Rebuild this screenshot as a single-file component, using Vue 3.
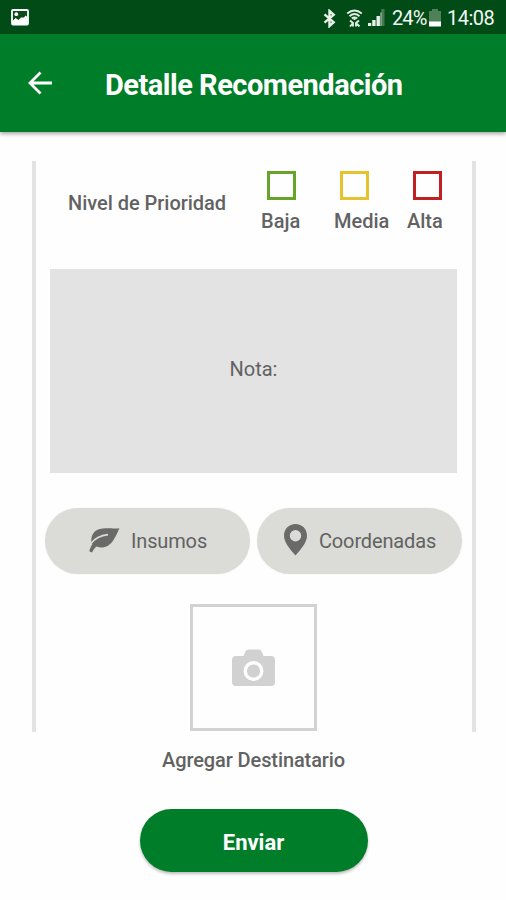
<script setup>
const levels = [
  { name: 'Baja', key: 'low' },
  { name: 'Media', key: 'mid' },
  { name: 'Alta', key: 'high' },
]
</script>

<template>
  <div class="screen">
    <div class="status">
      <svg class="picture" viewBox="0 0 18 17">
        <rect x="1" y="1" width="16" height="14.5" rx="1" fill="#0c4a18" stroke="#fff" stroke-width="1.8" />
        <path d="M1.5 15.500V12L4.500 9 7.500 11 10 8.500 13 8.500 14.500 6.500 16.500 8V15.500z" fill="#fff" />
        <circle cx="5.300" cy="5.200" r="1.900" fill="#fff" />
      </svg>
      <div class="indicators">
        <svg class="bluetooth" viewBox="0 0 13 19">
          <path d="M1.500 5.300 10.700 13.200 6.500 17V2L10.700 5.800 1.500 13.700" fill="none" stroke="#e9f2ea" stroke-width="2.400" />
        </svg>
        <svg class="wifi" viewBox="0 0 17 18" fill="none" stroke="#e0ebe1">
          <path d="M1.200 4.500Q8.500-1.600 15.800 4.500M3.500 7.200Q8.500 3 13.500 7.200M5.800 9.500Q8.500 7.400 11.200 9.500" stroke-width="1.900" />
          <path d="M8.500 9v2" stroke-width="2" />
          <path d="M4 11.500 7 14V17.500M4 17.500 7 14M13 11.500 10 14V17.500M13.500 17.500 10 14" stroke-width="1.900" />
        </svg>
        <svg class="signal" viewBox="0 0 18 17">
          <path d="M0 17v-3h3.300v3zM4.200 17v-6h3.400v6zM8.500 17V7h3.400v10z" fill="#e9f2ea" />
          <path d="M13.200 17V0h3.300v17z" fill="#46774f" />
          <path d="M13 17V3.500" stroke="#c8d8ca" />
        </svg>
        <span class="percent">24%</span>
        <svg class="battery" viewBox="0 0 12 18">
          <path d="M0 2h3V0h6v2h3v11H0z" fill="#4f8159" />
          <path d="M0 12.500h12v5H0z" fill="#fff" />
        </svg>
        <span class="clock">14:08</span>
      </div>
    </div>
    <header class="bar">
      <svg class="back" viewBox="0 0 24 24">
        <path d="M12.500 1.500 2 12l10.500 10.500M2 12h22" fill="none" stroke="#fff" stroke-width="2.800" />
      </svg>
      <h1>Detalle Recomendación</h1>
    </header>

    <main>
      <section class="panel">
        <div class="priority">
          <span class="caption">Nivel de Prioridad</span>
          <div class="levels">
            <div v-for="level in levels" :key="level.key" class="level" :class="level.key">
              <span class="box"></span>
              <span class="name">{{ level.name }}</span>
            </div>
          </div>
        </div>
        <div class="note"><span>Nota:</span></div>
        <div class="actions">
          <button class="pill supplies">
            <svg class="leaf" viewBox="0 0 31 26">
              <path d="M2.500 16.500C1 5 8 1.200 17 1.200c6 0 9 .5 13.500 0C28 6.500 27 9 24.500 13 20.500 20 13 22 7.500 19.500 5.500 21 4.500 22.500 3 25.500L.3 24.300C1.200 21 2 19 3.500 17z" fill="#6a6b69" />
              <path d="M2 16.500C6 11 12 8.300 19 7.600" fill="none" stroke="#dbdcd7" stroke-width="1.700" />
            </svg>
            <span>Insumos</span>
          </button>
          <button class="pill coords">
            <svg class="pin" viewBox="0 0 23 32">
              <path fill-rule="evenodd" d="M11.500 0C5 0 0 5 0 11.500 0 18 5 24 11.500 31.500 18 24 23 18 23 11.500 23 5 18 0 11.500 0zM11.500 6a5.700 5.700 0 1 1 0 11.400 5.700 5.700 0 0 1 0-11.400z" fill="#6a6b69" />
            </svg>
            <span>Coordenadas</span>
          </button>
        </div>
        <div class="photo">
          <svg class="camera" viewBox="0 0 43 38">
            <path d="M4 7h7.500l1.500-4Q14 .5 16.500 .5h10Q29 .5 30 3L31.500 7H39q4 0 4 4v22q0 4-4 4H4q-4 0-4-4V11q0-4 4-4z" fill="#d1d1d1" />
            <circle cx="21.500" cy="22" r="8.300" fill="none" stroke="#fff" stroke-width="3.400" />
          </svg>
        </div>
      </section>
      <p class="recipient"><span>Agregar Destinatario</span></p>
      <button class="send"><span>Enviar</span></button>
    </main>
  </div>
</template>

<style>
body {
  margin: 0;
  background: #fefefe;
}
</style>

<style scoped>
.screen {
  width: 506px;
  height: 900px;
  overflow: hidden;
  box-sizing: border-box;
  font-family: Roboto, "Liberation Sans", sans-serif;
  color: #626262;
  background: #fefefe;
}
svg {
  display: block;
  flex: none;
}
span {
  white-space: nowrap;
}
button {
  border: 0;
  padding: 0;
  font: inherit;
  color: inherit;
}
.status {
  height: 34px;
  box-sizing: border-box;
  display: flex;
  justify-content: space-between;
  padding: 9px 12px 0 11px;
  background: #004b16;
}
.picture {
  width: 18px;
  height: 17px;
}
.indicators {
  display: flex;
  height: 19px;
  color: #f3f8f3;
  font-size: 20px;
  line-height: 19px;
}
.bluetooth {
  width: 13px;
  height: 19px;
  margin-right: 10px;
}
.wifi {
  width: 17px;
  height: 18px;
  margin-right: 5px;
}
.signal {
  width: 18px;
  height: 17px;
  margin-right: 6px;
}
.percent {
  width: 37px;
  letter-spacing: -0.9px;
}
.battery {
  width: 12px;
  height: 18px;
  margin-right: 6px;
}
.clock {
  width: 47px;
  letter-spacing: -0.5px;
}
.bar {
  height: 98px;
  display: flex;
  align-items: center;
  background: #007d28;
  box-shadow: 0 2px 4px rgba(0, 0, 0, 0.35);
}
.back {
  width: 24px;
  height: 24px;
  margin: 0 53px 0 28px;
}
h1 {
  margin: 4px 0 0;
  font-size: 29px;
  font-weight: 700;
  line-height: 34px;
  letter-spacing: -0.5px;
  color: #fff;
  white-space: nowrap;
}
main {
  padding: 29px 30px 0 32px;
  display: flex;
  flex-direction: column;
}
.panel {
  height: 571px;
  box-sizing: border-box;
  border: solid #e3e3e3;
  border-width: 0 4px;
  display: flex;
  flex-direction: column;
}
.priority {
  height: 108px;
  display: flex;
}
.caption {
  width: 193px;
  margin: 30px 0 0 32px;
  font-size: 20px;
  font-weight: 500;
  line-height: 24px;
  letter-spacing: -0.03px;
}
.levels {
  display: flex;
  padding-top: 10px;
}
.level {
  width: 73px;
  display: flex;
  flex-direction: column;
  font-size: 20px;
  font-weight: 500;
  line-height: 24px;
}
.level.high {
  width: auto;
}
.box {
  width: 29px;
  height: 29px;
  box-sizing: border-box;
  border: 3px solid;
  margin: 0 0 9px 6px;
}
.low .box {
  border-color: #66a529;
}
.mid .box {
  border-color: #e6c32e;
}
.high .box {
  border-color: #be2023;
}
.note {
  height: 204px;
  box-sizing: border-box;
  margin: 0 15px 0 14px;
  padding-bottom: 4px;
  display: flex;
  align-items: center;
  justify-content: center;
  background: #e3e3e3;
  font-size: 20px;
}
.actions {
  display: flex;
  gap: 7px;
  padding: 35px 0 0 9px;
}
.pill {
  width: 205px;
  height: 66px;
  border-radius: 33px;
  display: flex;
  align-items: center;
  background: #dbdcd7;
  box-shadow: 0 0 2px #eeeeeb;
  font-size: 20px;
  letter-spacing: -0.15px;
}
.leaf {
  width: 31px;
  height: 26px;
  margin: 0 11px 3px 44px;
}
.pin {
  width: 23px;
  height: 32px;
  margin: 0 12px 2px 27px;
}
.photo {
  width: 127px;
  height: 127px;
  box-sizing: border-box;
  margin: 30px 0 0 154px;
  border: 3px solid #d2d2d2;
  display: flex;
  align-items: center;
  justify-content: center;
}
.camera {
  width: 43px;
  height: 38px;
}
.recipient {
  margin: 16px 0 0 130px;
  font-size: 20px;
  font-weight: 500;
  line-height: 24px;
  letter-spacing: -0.1px;
}
.send {
  width: 228px;
  height: 63px;
  margin: 37px 0 0 107.5px;
  padding-top: 3px;
  border-radius: 32px;
  background: #007d28;
  box-shadow: 0 2px 3px rgba(0, 0, 0, 0.25);
  color: #fff;
  font-size: 22px;
  font-weight: 700;
}
</style>
